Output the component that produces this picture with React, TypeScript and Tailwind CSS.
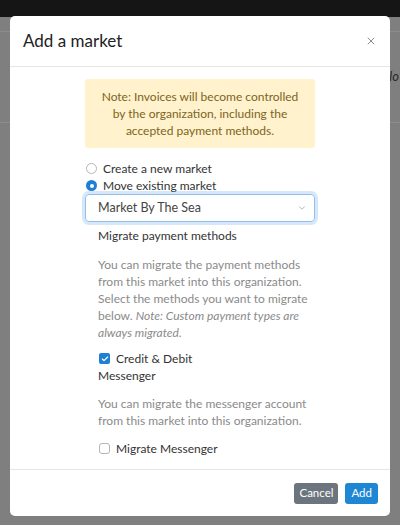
import { ChevronDown, X, Check } from 'lucide-react';

export default function App() {
  return (
    <div className="relative h-[525px] w-[400px] overflow-hidden bg-[#7f7f7f] font-['Lato',sans-serif]">
      {/* page behind the backdrop */}
      <div className="flex flex-col">
        <div className="h-[17px] bg-[#151515]" />
        <div className="h-[14px]" />
        <div className="h-px bg-[#8c8c8c]" />
        <div className="flex h-[90px] items-center justify-end">
          <span className="mr-[1px] text-[13px] italic text-[#2a2a2a]">lo</span>
        </div>
        <div className="h-px bg-[#8c8c8c]" />
      </div>

      {/* modal */}
      <div className="absolute left-[10px] top-4 flex w-[380px] flex-col rounded-[5px] bg-white text-[#212529]">
        <div className="flex h-[51px] items-center justify-between border-b border-[#e5e5e5] pl-[13px] pr-[13px]">
          <h2 className="text-[17px] font-normal text-[#222]">Add a market</h2>
          <X className="h-[12px] w-[12px] text-[#777]" strokeWidth={1.7} />
        </div>

        <div className="flex h-[402px] justify-center pt-[12px]">
          <div className="flex w-[230px] flex-col text-[12px]">
            <div className="rounded-[3px] bg-[#fff2cc] px-3 py-[9px] text-center leading-[17px] text-[#7d6424]">
              Note: Invoices will become controlled by the organization, including the accepted payment methods.
            </div>

            <div className="mt-[12px] flex flex-col leading-[17px] text-[#333]">
              <label className="flex items-center gap-[6px] pl-[1px]">
                <span className="h-[11px] w-[11px] rounded-full border border-[#b5b5b5] bg-white" />
                Create a new market
              </label>
              <label className="flex items-center gap-[6px] pl-[1px]">
                <span className="flex h-[11px] w-[11px] items-center justify-center rounded-full bg-[#1e7fd6]">
                  <span className="h-[4px] w-[4px] rounded-full bg-white" />
                </span>
                Move existing market
              </label>
            </div>

            <div className="flex h-[28px] items-center justify-between rounded-[4px] border border-[#8fc0f0] pl-[12px] pr-[7px] text-[12.5px] text-[#444] shadow-[0_0_0_3px_rgba(30,127,214,0.18)]">
              <span>Market By The Sea</span>
              <ChevronDown className="h-[10px] w-[10px] text-[#888]" strokeWidth={1.5} />
            </div>

            <div className="flex flex-col pl-[13px]">
              <div className="mt-[5px] leading-[17px] text-[#333]">Migrate payment methods</div>
              <p className="mt-[12px] leading-[17px] text-[#8a8a8a]">
                You can migrate the payment methods from this market into this organization. Select the methods you want to migrate below. <em>Note: Custom payment types are always migrated.</em>
              </p>
              <label className="mt-[9px] flex items-center gap-[6px] pl-[1px] leading-[17px] text-[#333]">
                <span className="flex h-[11px] w-[11px] items-center justify-center rounded-[2px] bg-[#1e7fd6]">
                  <Check className="h-[8px] w-[8px] text-white" strokeWidth={3.5} />
                </span>
                Credit &amp; Debit
              </label>
              <div className="leading-[17px] text-[#333]">Messenger</div>
              <p className="mt-[11px] leading-[17px] text-[#8a8a8a]">
                You can migrate the messenger account from this market into this organization.
              </p>
              <label className="mt-[11px] flex items-center gap-[6px] pl-[1px] leading-[17px] text-[#333]">
                <span className="h-[11px] w-[11px] rounded-[3px] border border-[#b5b5b5] bg-white" />
                Migrate Messenger
              </label>
            </div>
          </div>
        </div>

        <div className="flex h-[47px] items-center justify-end gap-[7px] border-t border-[#e5e5e5] pr-[12px]">
          <button className="h-[21px] rounded-[3px] bg-[#6c757d] px-[5px] text-[11.5px] text-white">Cancel</button>
          <button className="h-[21px] rounded-[3px] bg-[#1f86d4] px-[6px] text-[11.5px] text-white">Add</button>
        </div>
      </div>
    </div>
  );
}
